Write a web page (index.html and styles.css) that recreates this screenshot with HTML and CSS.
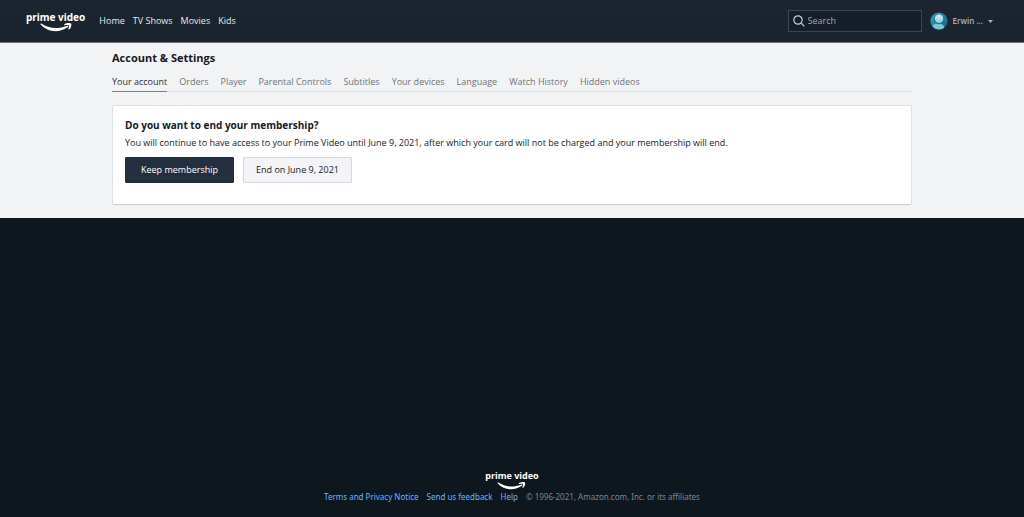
FILE: index.html
```html
<!DOCTYPE html>
<html lang="en">
<head>
    <meta charset="UTF-8">
    <meta name="viewport" content="width=device-width, initial-scale=1.0">
    <title>Prime Video: Account &amp; Settings</title>
    <link rel="stylesheet" href="styles.css">
</head>
<body>
    <header class="header">
        <a class="logo" href="#">
            <span>prime video</span>
            <svg class="smile" viewBox="0 0 32 9" aria-hidden="true">
                <path d="M1.2 0.6C9 5.8 18 6.4 27 2.8C28.2 2.4 28.9 3.3 28 4C20 10 8 9.8 0.6 1.6C0.1 0.9 0.5 0.2 1.2 0.6Z"/>
                <path d="M24.4 1.2C26.8 -0.3 30.2 -0.1 31.1 0.5C31.9 1.4 31.1 4.8 29.2 6.4C28.6 6.8 28.1 6.4 28.4 5.7C29 4 29.3 2.8 28.9 2.4C28.4 1.9 26.6 2.1 25 2.3C24.2 2.3 23.8 1.6 24.4 1.2Z"/>
            </svg>
        </a>
        <nav class="nav">
            <a href="#">Home</a>
            <a href="#">TV Shows</a>
            <a href="#">Movies</a>
            <a href="#">Kids</a>
        </nav>
        <form class="search">
            <svg class="search-icon" viewBox="0 0 12 12" aria-hidden="true">
                <circle cx="5" cy="5" r="4.2"/>
                <path d="M8 8L11.4 11.4"/>
            </svg>
            <input type="text" placeholder="Search" aria-label="Search">
        </form>
        <button class="profile" type="button">
            <svg class="avatar" viewBox="0 0 18 18" aria-hidden="true">
                <defs>
                    <linearGradient id="ring" x1="0" y1="0" x2="1" y2="1">
                        <stop offset="0" stop-color="#3fa3bf"/>
                        <stop offset="1" stop-color="#0f5f80"/>
                    </linearGradient>
                    <linearGradient id="person" x1="0" y1="0" x2="0" y2="1">
                        <stop offset="0" stop-color="#d3f0f5"/>
                        <stop offset="1" stop-color="#8accdc"/>
                    </linearGradient>
                    <clipPath id="disc"><circle cx="9" cy="9" r="8.6"/></clipPath>
                </defs>
                <circle cx="9" cy="9" r="8.6" fill="url(#ring)"/>
                <g clip-path="url(#disc)">
                    <ellipse cx="8" cy="15.6" rx="6.4" ry="4" fill="#7cc4d6"/>
                    <circle cx="9" cy="7.2" r="5" fill="#1c7796"/>
                    <circle cx="9" cy="6.8" r="4.2" fill="url(#person)"/>
                </g>
            </svg>
            <span>Erwin ...</span>
            <svg class="caret" viewBox="0 0 5 3" aria-hidden="true"><path d="M0 0H5L2.5 3Z"/></svg>
        </button>
    </header>
    <main class="main">
        <div class="container">
            <h1>Account &amp; Settings</h1>
            <nav class="tabs">
                <a class="active" href="#">Your account</a>
                <a href="#">Orders</a>
                <a href="#">Player</a>
                <a href="#">Parental Controls</a>
                <a href="#">Subtitles</a>
                <a href="#">Your devices</a>
                <a href="#">Language</a>
                <a href="#">Watch History</a>
                <a href="#">Hidden videos</a>
            </nav>
            <section class="card">
                <h2>Do you want to end your membership?</h2>
                <p>You will continue to have access to your Prime Video until June 9, 2021, after which your card will not be charged and your membership will end.</p>
                <div class="actions">
                    <button class="btn btn-dark" type="button">Keep membership</button>
                    <button class="btn" type="button">End on June 9, 2021</button>
                </div>
            </section>
        </div>
    </main>
    <footer class="footer">
        <a class="logo logo-small" href="#">
            <span>prime video</span>
            <svg class="smile" viewBox="0 0 32 9" aria-hidden="true">
                <path d="M1.2 0.6C9 5.8 18 6.4 27 2.8C28.2 2.4 28.9 3.3 28 4C20 10 8 9.8 0.6 1.6C0.1 0.9 0.5 0.2 1.2 0.6Z"/>
                <path d="M24.4 1.2C26.8 -0.3 30.2 -0.1 31.1 0.5C31.9 1.4 31.1 4.8 29.2 6.4C28.6 6.8 28.1 6.4 28.4 5.7C29 4 29.3 2.8 28.9 2.4C28.4 1.9 26.6 2.1 25 2.3C24.2 2.3 23.8 1.6 24.4 1.2Z"/>
            </svg>
        </a>
        <div class="footer-links">
            <a href="#">Terms and Privacy Notice</a>
            <a href="#">Send us feedback</a>
            <a href="#">Help</a>
            <span>© 1996-2021, Amazon.com, Inc. or its affiliates</span>
        </div>
    </footer>
</body>
</html>
```

FILE: styles.css
```css
* {
    box-sizing: border-box;
}
body {
    display: flex;
    flex-direction: column;
    min-height: 100vh;
    margin: 0;
    background: #0f171e;
    color: #16191f;
    font-family: "Open Sans", "Noto Sans", sans-serif;
    font-size: 9px;
    line-height: 14px;
}
a {
    color: inherit;
    text-decoration: none;
}
button, input {
    font: inherit;
}
.header {
    display: flex;
    align-items: center;
    height: 43px;
    padding: 0 31px 0 26px;
    background: linear-gradient(#1b2530, #1a242f);
    border-bottom: 1px solid #6b737b;
    color: #e6eaed;
}
.logo {
    display: flex;
    flex-direction: column;
    align-items: center;
    color: #fff;
    font-family: "Noto Sans", "Open Sans", sans-serif;
    font-size: 10px;
    font-weight: 700;
    line-height: 12px;
}
.smile {
    width: 32px;
    height: 9px;
    fill: currentColor;
}
.nav {
    display: flex;
    gap: 8px;
    margin-left: 14px;
    font-weight: 500;
}
.search {
    display: flex;
    align-items: center;
    gap: 3px;
    width: 134px;
    height: 22px;
    margin-left: auto;
    padding: 0 4px;
    background: #161e29;
    border: 1px solid #3a4653;
}
.search-icon {
    flex: none;
    width: 12px;
    height: 12px;
    fill: none;
    stroke: #c5cbd0;
    stroke-width: 1.2;
}
.search input {
    flex: 1;
    min-width: 0;
    padding: 0;
    background: none;
    border: 0;
    outline: 0;
    color: #fff;
}
.search input::placeholder {
    color: #a0a6ac;
    opacity: 1;
}
.profile {
    display: flex;
    align-items: center;
    gap: 5px;
    margin-left: 8px;
    padding: 0;
    background: none;
    border: 0;
    color: #aab1b7;
    cursor: pointer;
    font-size: 8px;
    font-weight: 600;
}
.avatar {
    width: 18px;
    height: 18px;
}
.caret {
    width: 5px;
    height: 3px;
    fill: currentColor;
}
.main {
    padding: 7px 0 13px;
    background: #f2f3f5;
}
.container {
    width: 78.125%;
    margin: 0 auto;
}
h1 {
    margin: 0;
    font-size: 11px;
    line-height: 15px;
}
.tabs {
    display: flex;
    gap: 12px;
    margin: 10px 0 13px;
    border-bottom: 1px solid #dcdfe3;
    color: #6f747b;
}
.tabs a {
    margin-bottom: -1px;
    padding-bottom: 2px;
    border-bottom: 1px solid transparent;
}
.tabs .active {
    border-color: #7b8087;
    color: #2b3037;
}
.card {
    padding: 11px 12px 21px;
    background: #fff;
    border: 1px solid #dfe2e5;
    border-bottom-color: #c8cdd2;
    border-radius: 2px;
}
h2 {
    margin: 0;
    font-size: 10px;
    line-height: 16px;
}
.card p {
    margin: 3px 0 7px;
}
.actions {
    display: flex;
    gap: 9px;
}
.btn {
    min-width: 109px;
    height: 26px;
    padding: 0 12px;
    background: #f2f4f8;
    border: 1px solid #d5dae0;
    border-radius: 1px;
    color: #16191f;
    cursor: pointer;
}
.btn-dark {
    background: #232f3e;
    border-color: #232f3e;
    color: #fff;
}
.footer {
    display: flex;
    flex-direction: column;
    align-items: center;
    margin-top: auto;
    padding-bottom: 13px;
}
.logo-small {
    font-size: 9px;
}
.logo-small .smile {
    width: 29px;
    height: 8px;
}
.footer-links {
    display: flex;
    gap: 8px;
    color: #7b858f;
    font-family: "Noto Sans", "Open Sans", sans-serif;
    font-size: 8px;
}
.footer-links a {
    color: #6fb2f5;
}
```
